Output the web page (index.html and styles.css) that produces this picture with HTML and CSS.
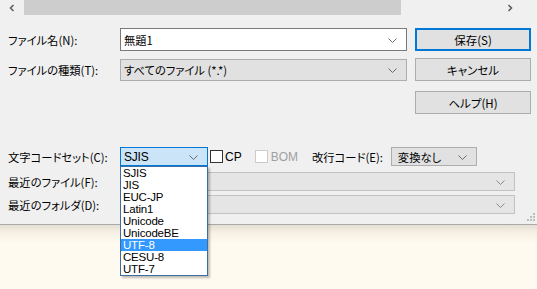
FILE: index.html
```html
<!DOCTYPE html>
<html lang="ja">
<head>
  <meta charset="UTF-8" />
  <title>名前を付けて保存</title>
  <link rel="stylesheet" href="styles.css">
</head>
<body>
  <!-- 横スクロールバー -->
  <div class="hscroll">
    <span class="arrow">
      <svg width="8" height="8" viewBox="0 0 8 8"><path d="M5.5 1 L2.5 4 L5.5 7" fill="none" stroke="#606060" stroke-width="1.6"/></svg>
    </span>
    <div class="track"><div class="thumb"></div></div>
    <span class="arrow right">
      <svg width="8" height="8" viewBox="0 0 8 8"><path d="M2.5 1 L5.5 4 L2.5 7" fill="none" stroke="#606060" stroke-width="1.6"/></svg>
    </span>
  </div>

  <div class="dialog">
    <div class="top">
      <div class="fields">
        <div class="row">
          <label class="label">ファイル名(N):</label>
          <div class="combo edit">
            <span class="value">無題1</span>
            <svg class="chev" width="9" height="5" viewBox="0 0 9 5"><path d="M0.5 0.5 L4.5 4.5 L8.5 0.5" fill="none" stroke="#6a6a6a"/></svg>
          </div>
        </div>
        <div class="row row-type">
          <label class="label">ファイルの種類(T):</label>
          <div class="combo gray">
            <span class="value">すべてのファイル (*.*)</span>
            <svg class="chev" width="9" height="5" viewBox="0 0 9 5"><path d="M0.5 0.5 L4.5 4.5 L8.5 0.5" fill="none" stroke="#6a6a6a"/></svg>
          </div>
        </div>
      </div>
      <div class="buttons">
        <button class="btn default">保存(S)</button>
        <button class="btn">キャンセル</button>
        <button class="btn help">ヘルプ(H)</button>
      </div>
    </div>

    <div class="options">
      <div class="orow">
        <label class="label">文字コードセット(C):</label>
        <div class="combo small focus">
          <span class="value gothic">SJIS</span>
          <svg class="chev" width="9" height="5" viewBox="0 0 9 5"><path d="M0.5 0.5 L4.5 4.5 L8.5 0.5" fill="none" stroke="#6a6a6a"/></svg>
        </div>
        <span class="check"><span class="box"></span>CP</span>
        <span class="check disabled"><span class="box"></span>BOM</span>
        <label class="label eol">改行コード(E):</label>
        <div class="combo small gray eol-box">
          <span class="value">変換なし</span>
          <svg class="chev" width="9" height="5" viewBox="0 0 9 5"><path d="M0.5 0.5 L4.5 4.5 L8.5 0.5" fill="none" stroke="#6a6a6a"/></svg>
        </div>
      </div>
      <div class="orow recent">
        <label class="label">最近のファイル(F):</label>
        <div class="combo small off">
          <svg class="chev" width="9" height="5" viewBox="0 0 9 5"><path d="M0.5 0.5 L4.5 4.5 L8.5 0.5" fill="none" stroke="#888"/></svg>
        </div>
      </div>
      <div class="orow recent last">
        <label class="label">最近のフォルダ(D):</label>
        <div class="combo small off">
          <svg class="chev" width="9" height="5" viewBox="0 0 9 5"><path d="M0.5 0.5 L4.5 4.5 L8.5 0.5" fill="none" stroke="#888"/></svg>
        </div>
      </div>
    </div>

    <!-- 文字コードのドロップダウン -->
    <ul class="droplist gothic">
      <li>SJIS</li>
      <li>JIS</li>
      <li>EUC-JP</li>
      <li>Latin1</li>
      <li>Unicode</li>
      <li>UnicodeBE</li>
      <li class="sel">UTF-8</li>
      <li>CESU-8</li>
      <li>UTF-7</li>
    </ul>

    <svg class="grip" width="8" height="8" viewBox="0 0 8 8">
      <rect x="6" y="0" width="2" height="2" fill="#bdbdbd"/>
      <rect x="3" y="3" width="2" height="2" fill="#bdbdbd"/>
      <rect x="6" y="3" width="2" height="2" fill="#bdbdbd"/>
      <rect x="0" y="6" width="2" height="2" fill="#bdbdbd"/>
      <rect x="3" y="6" width="2" height="2" fill="#bdbdbd"/>
      <rect x="6" y="6" width="2" height="2" fill="#bdbdbd"/>
    </svg>
  </div>

  <div class="below"></div>
</body>
</html>
```

FILE: styles.css
```css
/* 保存ダイアログ */
body {
  margin: 0;
  width: 537px;
  height: 289px;
  overflow: hidden;
  background: #fffaf0;
  font-family: "Noto Sans CJK JP", sans-serif;
  font-size: 11.3px;
  font-feature-settings: "palt";
  color: #000;
}

.hscroll {
  display: flex;
  height: 15px;
  background: #f0f0f0;
}

.hscroll .arrow {
  width: 24px;
  flex: none;
  display: flex;
  align-items: center;
  justify-content: center;
}

.hscroll .arrow.right {
  margin-right: 15px;
}

.track {
  flex: 1;
  display: flex;
}

.thumb {
  width: 377px;
  background: #cdcdcd;
}

.dialog {
  position: relative;
  background: #f0f0f0;
  height: 210px;
  box-sizing: border-box;
  padding: 13px 6px 0 8px;
  border-bottom: 1px solid #a9a9a9;
}

.top {
  display: flex;
}

.fields {
  width: 399px;
}

.row {
  display: flex;
  align-items: center;
  height: 23px;
}

.row-type {
  margin-top: 8px;
  height: 22px;
}

.label {
  width: 112px;
  flex: none;
  white-space: nowrap;
}

.combo {
  position: relative;
  flex: 1;
  height: 100%;
  box-sizing: border-box;
  border: 1px solid #7a7a7a;
  background: #fff;
  display: flex;
  align-items: center;
  padding-left: 3px;
}

.combo .value {
  white-space: nowrap;
}

.combo .chev {
  position: absolute;
  right: 9px;
  top: 50%;
  margin-top: -2px;
}

.combo.gray {
  background: #e1e1e1;
  border-color: #adadad;
}

.buttons {
  margin-left: 8px;
  width: 116px;
  display: flex;
  flex-direction: column;
}

.btn {
  height: 23px;
  padding: 0;
  font: inherit;
  font-size: 11.5px;
  background: #e1e1e1;
  border: 1px solid #adadad;
  color: #000;
}

.btn + .btn {
  margin-top: 7px;
}

.btn.help {
  margin-top: 10px;
}

.btn.default {
  border: 2px solid #0078d7;
}

.options {
  margin-top: 33px;
}

.orow {
  display: flex;
  align-items: center;
  height: 19px;
}

.orow.recent {
  margin-top: 6px;
}

.orow.last {
  margin-top: 4px;
}

.combo.small {
  flex: none;
  width: 88px;
}

.combo.focus {
  background: #cce4f7;
  border-color: #0078d7;
}

.combo.eol-box {
  width: 86px;
  padding-left: 6px;
}

.combo.off {
  width: 395px;
  background: #e5e5e5;
  border-color: #c2c2c2;
}

.gothic {
  font-family: "Liberation Sans", sans-serif;
  font-size: 12px;
  letter-spacing: -0.2px;
}

.check {
  display: flex;
  align-items: center;
  margin-left: 2px;
  font-family: "Liberation Sans", sans-serif;
  font-size: 12px;
}

.check .box {
  width: 11px;
  height: 11px;
  border: 1px solid #333;
  background: #fff;
  margin-right: 2px;
}

.check.disabled {
  margin-left: 13px;
  color: #a0a0a0;
}

.check.disabled .box {
  border-color: #cccccc;
  margin-right: 3px;
}

.label.eol {
  width: auto;
  margin-left: 14px;
  margin-right: 8px;
}

.droplist {
  position: absolute;
  left: 120px;
  top: 151px;
  width: 88px;
  box-sizing: border-box;
  margin: 0;
  padding: 0;
  list-style: none;
  background: #fff;
  border: 1px solid #3b6ea5;
  box-shadow: 2px 2px 2px rgba(0, 0, 0, 0.25);
}

.droplist li {
  height: 12px;
  line-height: 12px;
  padding-left: 2px;
  font-size: 11.5px;
  overflow: hidden;
}

.droplist li.sel {
  background: #3399ff;
  color: #fff;
}

.grip {
  position: absolute;
  right: 2px;
  bottom: 3px;
}

.below {
  height: 64px;
  background: linear-gradient(#e4dfd2, #f6f1e4 8px, #fffaf0 18px);
}
```
